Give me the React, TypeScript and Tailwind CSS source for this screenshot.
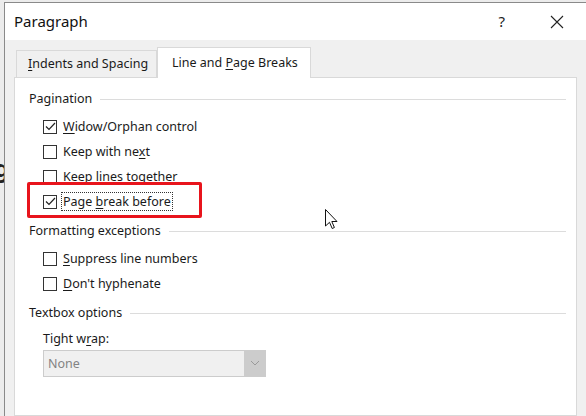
import { ReactNode } from "react"

const FONT = '"Noto Sans","Open Sans",sans-serif'

function U({ children }: { children: ReactNode }) {
  return <span className="underline underline-offset-2 decoration-1">{children}</span>
}

function Check({ checked, children, focus }: { checked?: boolean; children: ReactNode; focus?: boolean }) {
  return (
    <div className="flex h-[25px] items-center">
      <div className="flex h-[14px] w-[14px] items-center justify-center border border-[#333] bg-white">
        {checked && (
          <svg width="11" height="9" viewBox="0 0 11 9" fill="none">
            <path d="M1 4.5 L4 7.5 L10 1" stroke="#222" strokeWidth="1.2" />
          </svg>
        )}
      </div>
      <span
        className={
          "ml-[5px] px-[1px] leading-[17px] text-[#1a1a1a] " +
          (focus ? "outline outline-1 outline-dotted outline-[#333]" : "")
        }
      >
        {children}
      </span>
    </div>
  )
}

function Group({ title, children }: { title: string; children: ReactNode }) {
  return (
    <div className="flex flex-col">
      <div className="flex h-[18px] items-center">
        <span className="pl-[14px] pr-[8px] text-[#1a1a1a]">{title}</span>
        <div className="h-px flex-1 bg-[#dcdcdc]" />
      </div>
      <div className="pl-[28px]">{children}</div>
    </div>
  )
}

export default function App() {
  return (
    <div
      className="relative h-[416px] w-[586px] overflow-hidden bg-[#ececec] pl-[4px] pt-[2px] text-[12.5px]"
      style={{ fontFamily: FONT }}
    >
      <span className="absolute left-[-6px] top-[150px] text-[24px] font-bold text-[#222]">g</span>
      <div className="relative z-10 flex h-full flex-col border-l border-t border-[#8a8a8a] bg-[#f0f0f0]">
        {/* title bar */}
        <div className="flex h-[37px] items-center bg-white">
          <span className="ml-[9px] text-[15px] text-[#111]">Paragraph</span>
          <span className="ml-auto mr-[45px] text-[15px] text-[#222]">?</span>
          <svg className="mr-[22px]" width="14" height="14" viewBox="0 0 14 14">
            <path d="M1 1 L13 13 M13 1 L1 13" stroke="#222" strokeWidth="1.1" />
          </svg>
        </div>
        {/* tabs */}
        <div className="flex h-[37px] items-end pl-[11px]">
          <div className="flex h-[27px] w-[141px] items-center border border-b-0 border-[#d9d9d9] bg-[#f0f0f0] pl-[11px] text-[#1a1a1a]">
            <span>
              <U>I</U>ndents and Spacing
            </span>
          </div>
          <div className="relative top-px flex h-[31px] w-[154px] items-center border border-b-0 border-[#d9d9d9] bg-white pl-[14px] text-[#1a1a1a]">
            <span>
              Line and <U>P</U>age Breaks
            </span>
          </div>
        </div>
        {/* panel */}
        <div className="ml-[9px] mr-[9px] flex flex-1 flex-col border border-[#d9d9d9] bg-white pr-[10px] pt-[12px]">
          <Group title="Pagination">
            <div className="pt-[6px]">
              <Check checked>
                <U>W</U>idow/Orphan control
              </Check>
              <Check>
                Keep with ne<U>x</U>t
              </Check>
              <Check>Keep lines together</Check>
              <Check checked focus>
                Page <U>b</U>reak before
              </Check>
            </div>
          </Group>
          <div className="mt-[8px]">
            <Group title="Formatting exceptions">
              <div className="pt-[6px]">
                <Check>
                  <U>S</U>uppress line numbers
                </Check>
                <Check>
                  <U>D</U>on't hyphenate
                </Check>
              </div>
            </Group>
          </div>
          <div className="mt-[8px]">
            <Group title="Textbox options">
              <div className="pt-[8px] text-[#1a1a1a]">
                Tight w<U>r</U>ap:
              </div>
              <div className="mt-[1px] flex h-[27px] w-[223px] border border-[#cccccc] bg-[#f0f0f0]">
                <span className="flex-1 pl-[4px] leading-[25px] text-[#838383]">None</span>
                <div className="flex w-[21px] items-center justify-center bg-[#cccccc]">
                  <svg width="10" height="6" viewBox="0 0 10 6">
                    <path d="M1 1 L5 5 L9 1" stroke="#9a9a9a" fill="none" strokeWidth="1" />
                  </svg>
                </div>
              </div>
            </Group>
          </div>
        </div>
      </div>
      {/* red annotation box */}
      <div className="absolute left-[27px] top-[182px] z-20 h-[36px] w-[175px] rounded-[2px] border-[3px] border-[#e8141c]" />
      {/* mouse cursor */}
      <svg className="absolute left-[325px] top-[209px] z-20" width="14" height="24" viewBox="0 0 14 24">
        <path
          d="M0.5 0.5 L0.5 17 L4.5 13.3 L7.2 19.5 L9.4 18.5 L6.8 12.5 L12 12.5 Z"
          fill="white"
          stroke="#111"
          strokeWidth="1"
        />
      </svg>
    </div>
  )
}
